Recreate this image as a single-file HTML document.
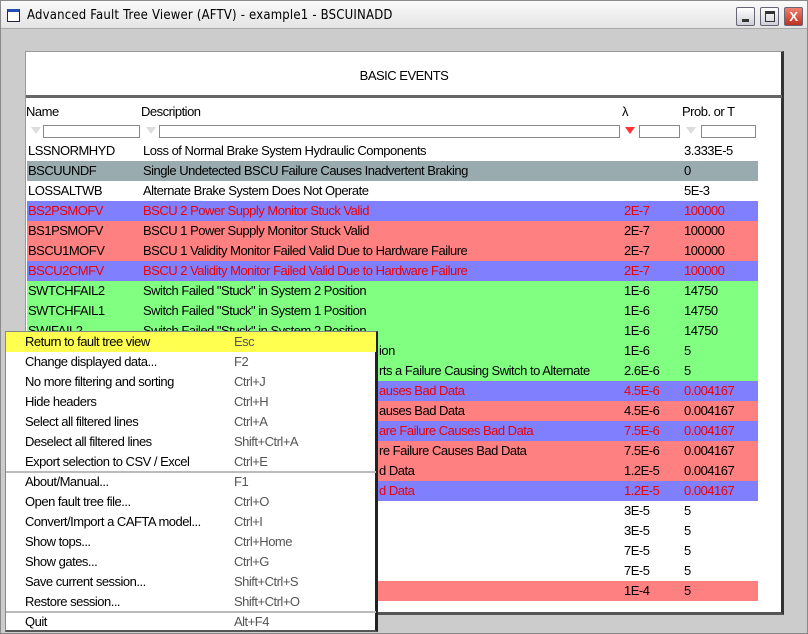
<!DOCTYPE html>
<html><head><style>
*{margin:0;padding:0;box-sizing:border-box}
body{width:808px;height:634px;background:#cfcfcf;position:relative;overflow:hidden;font-family:"Liberation Sans",sans-serif;font-size:13px;letter-spacing:-0.5px}
.win{position:absolute;left:0;top:0;width:808px;height:634px;border:1px solid #8a8a8a;background:#cccccc}
.title{position:absolute;left:0;top:0;width:806px;height:28px;background:linear-gradient(#fafafa,#e4e4e4);border-bottom:1px solid #aaa}
.title span{position:absolute;left:26px;top:7px;font-size:13px;letter-spacing:0.2px;font-family:"DejaVu Sans Condensed","Liberation Sans",sans-serif}
.ico{position:absolute;left:6px;top:8px;width:13px;height:13px;border:1px solid #224;background:#fff;border-top:3px solid #2050b0}
.btn{position:absolute;top:6px;width:19px;height:19px;border:1px solid #667;border-radius:2px;background:linear-gradient(#fff,#cfcfd8)}
.panel{position:absolute;left:24px;top:50px;width:759px;height:564px;background:#fff;border:1px solid #999;border-right:3px solid #333;border-bottom:3px solid #555}
.hdr{position:absolute;left:0;top:0;width:756px;height:46px;border-bottom:3px solid #666;text-align:center;line-height:48px;font-size:13px}
.row{position:absolute;left:1px;width:731px;height:20px;line-height:20px;white-space:nowrap;overflow:hidden}
.row span{position:absolute}
.c1{left:1px}.c2{left:116px}.c3{left:597px}.c4{left:657px}
.fr{left:352px}
.w{background:#fff}.g{background:#9aabb0}.b{background:#8080ff;color:#e00}.r{background:#ff8080}.gr{background:#80ff80}
.lab{position:absolute;top:52px}
.f{position:absolute;top:73px;height:13px;border:1px solid #888;background:#fff}
.tri{position:absolute;top:75px;width:0;height:0;border-left:5px solid transparent;border-right:5px solid transparent;border-top:7px solid #ddd}
.menu{position:absolute;left:4px;top:330px;width:373px;height:301px;background:#fff;border:1px solid #888;border-right:3px solid #222;border-bottom:2px solid #555}
.mi{position:absolute;left:0;width:370px;height:20px;line-height:20px;font-size:13px}
.mi b{font-weight:normal;position:absolute;left:19px}
.mi i{font-style:normal;position:absolute;left:228px;color:#555}
.sep{position:absolute;left:0;width:370px;height:2px;background:#bbb}
</style></head><body>
<div class="win">
<div class="title"><div class="ico"></div><span>Advanced Fault Tree Viewer (AFTV) - example1 - BSCUINADD</span>
<div class="btn" style="left:735px"><div style="position:absolute;left:5px;top:11px;width:7px;height:3px;background:#333"></div></div>
<div class="btn" style="left:759px"><div style="position:absolute;left:4px;top:3px;width:10px;height:11px;border:1px solid #333;border-top:3px solid #333"></div></div>
<div class="btn" style="left:783px;background:linear-gradient(#f08070,#c03020);color:#fff;text-align:center;font-weight:bold;line-height:17px">X</div>
</div>
<div class="panel">
<div class="hdr">BASIC EVENTS</div>
<div class="lab" style="left:0">Name</div><div class="lab" style="left:115px">Description</div><div class="lab" style="left:596px">λ</div><div class="lab" style="left:656px">Prob. or T</div>
<div class="tri" style="left:5px"></div><div class="f" style="left:17px;width:97px"></div>
<div class="tri" style="left:120px"></div><div class="f" style="left:133px;width:461px"></div>
<div class="tri" style="left:599px;border-top-color:#f33"></div><div class="f" style="left:613px;width:41px"></div>
<div class="tri" style="left:660px"></div><div class="f" style="left:675px;width:55px"></div>
<div class="row w" style="top:89px"><span class="c1">LSSNORMHYD</span><span class="c2">Loss of Normal Brake System Hydraulic Components</span><span class="c4">3.333E-5</span></div>
<div class="row g" style="top:109px"><span class="c1">BSCUUNDF</span><span class="c2">Single Undetected BSCU Failure Causes Inadvertent Braking</span><span class="c4">0</span></div>
<div class="row w" style="top:129px"><span class="c1">LOSSALTWB</span><span class="c2">Alternate Brake System Does Not Operate</span><span class="c4">5E-3</span></div>
<div class="row b" style="top:149px"><span class="c1">BS2PSMOFV</span><span class="c2">BSCU 2 Power Supply Monitor Stuck Valid</span><span class="c3">2E-7</span><span class="c4">100000</span></div>
<div class="row r" style="top:169px"><span class="c1">BS1PSMOFV</span><span class="c2">BSCU 1 Power Supply Monitor Stuck Valid</span><span class="c3">2E-7</span><span class="c4">100000</span></div>
<div class="row r" style="top:189px"><span class="c1">BSCU1MOFV</span><span class="c2">BSCU 1 Validity Monitor Failed Valid Due to Hardware Failure</span><span class="c3">2E-7</span><span class="c4">100000</span></div>
<div class="row b" style="top:209px"><span class="c1">BSCU2CMFV</span><span class="c2">BSCU 2 Validity Monitor Failed Valid Due to Hardware Failure</span><span class="c3">2E-7</span><span class="c4">100000</span></div>
<div class="row gr" style="top:229px"><span class="c1">SWTCHFAIL2</span><span class="c2">Switch Failed "Stuck" in System 2 Position</span><span class="c3">1E-6</span><span class="c4">14750</span></div>
<div class="row gr" style="top:249px"><span class="c1">SWTCHFAIL1</span><span class="c2">Switch Failed "Stuck" in System 1 Position</span><span class="c3">1E-6</span><span class="c4">14750</span></div>
<div class="row gr" style="top:269px"><span class="c1">SWIFAIL2</span><span class="c2">Switch Failed "Stuck" in System 2 Position</span><span class="c3">1E-6</span><span class="c4">14750</span></div>
<div class="row gr" style="top:289px"><span class="fr">ion</span><span class="c3">1E-6</span><span class="c4">5</span></div>
<div class="row gr" style="top:309px"><span class="fr">rts a Failure Causing Switch to Alternate</span><span class="c3">2.6E-6</span><span class="c4">5</span></div>
<div class="row b" style="top:329px"><span class="fr">auses Bad Data</span><span class="c3">4.5E-6</span><span class="c4">0.004167</span></div>
<div class="row r" style="top:349px"><span class="fr">auses Bad Data</span><span class="c3">4.5E-6</span><span class="c4">0.004167</span></div>
<div class="row b" style="top:369px"><span class="fr">are Failure Causes Bad Data</span><span class="c3">7.5E-6</span><span class="c4">0.004167</span></div>
<div class="row r" style="top:389px"><span class="fr">re Failure Causes Bad Data</span><span class="c3">7.5E-6</span><span class="c4">0.004167</span></div>
<div class="row r" style="top:409px"><span class="fr">d Data</span><span class="c3">1.2E-5</span><span class="c4">0.004167</span></div>
<div class="row b" style="top:429px"><span class="fr">d Data</span><span class="c3">1.2E-5</span><span class="c4">0.004167</span></div>
<div class="row w" style="top:449px"><span class="c3">3E-5</span><span class="c4">5</span></div>
<div class="row w" style="top:469px"><span class="c3">3E-5</span><span class="c4">5</span></div>
<div class="row w" style="top:489px"><span class="c3">7E-5</span><span class="c4">5</span></div>
<div class="row w" style="top:509px"><span class="c3">7E-5</span><span class="c4">5</span></div>
<div class="row r" style="top:529px"><span class="c3">1E-4</span><span class="c4">5</span></div>
</div>
<div class="menu">
<div class="mi" style="top:0;background:#ffff50"><b>Return to fault tree view</b><i>Esc</i></div>
<div class="mi" style="top:20px"><b>Change displayed data...</b><i>F2</i></div>
<div class="mi" style="top:40px"><b>No more filtering and sorting</b><i>Ctrl+J</i></div>
<div class="mi" style="top:60px"><b>Hide headers</b><i>Ctrl+H</i></div>
<div class="mi" style="top:80px"><b>Select all filtered lines</b><i>Ctrl+A</i></div>
<div class="mi" style="top:100px"><b>Deselect all filtered lines</b><i>Shift+Ctrl+A</i></div>
<div class="mi" style="top:120px"><b>Export selection to CSV / Excel</b><i>Ctrl+E</i></div>
<div class="sep" style="top:139px"></div>
<div class="mi" style="top:140px"><b>About/Manual...</b><i>F1</i></div>
<div class="mi" style="top:160px"><b>Open fault tree file...</b><i>Ctrl+O</i></div>
<div class="mi" style="top:180px"><b>Convert/Import a CAFTA model...</b><i>Ctrl+I</i></div>
<div class="mi" style="top:200px"><b>Show tops...</b><i>Ctrl+Home</i></div>
<div class="mi" style="top:220px"><b>Show gates...</b><i>Ctrl+G</i></div>
<div class="mi" style="top:240px"><b>Save current session...</b><i>Shift+Ctrl+S</i></div>
<div class="mi" style="top:260px"><b>Restore session...</b><i>Shift+Ctrl+O</i></div>
<div class="sep" style="top:279px"></div>
<div class="mi" style="top:280px"><b>Quit</b><i>Alt+F4</i></div>
</div>
</div>
</body></html>
